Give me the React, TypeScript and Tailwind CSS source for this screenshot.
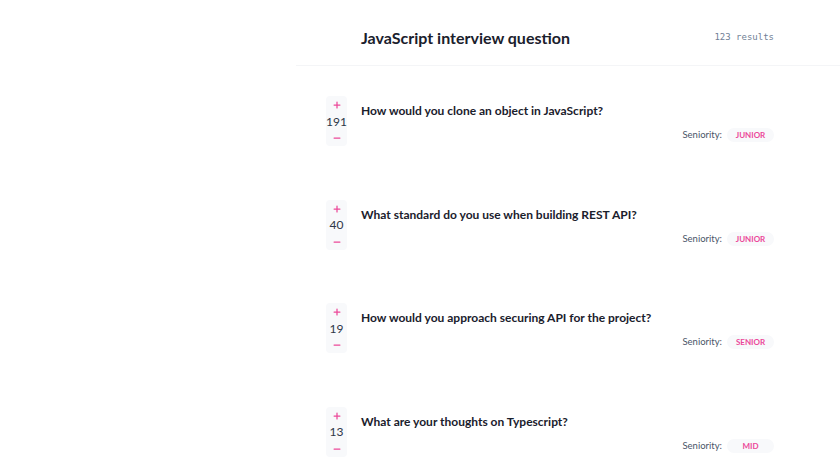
import { Minus, Plus } from 'lucide-react';

const questions = [
  { votes: 191, title: 'How would you clone an object in JavaScript?', seniority: 'Junior' },
  { votes: 40, title: 'What standard do you use when building REST API?', seniority: 'Junior' },
  { votes: 19, title: 'How would you approach securing API for the project?', seniority: 'Senior' },
  { votes: 13, title: 'What are your thoughts on Typescript?', seniority: 'Mid' },
];

function VoteBox({ votes }: { votes: number }) {
  return (
    <div className="flex h-[50px] w-[21px] shrink-0 flex-col items-center justify-between rounded bg-[#f8f9fb] pb-[3px] pt-[4px]">
      <Plus className="text-[#ec4899]" size={10} strokeWidth={3} />
      <span className="text-[12px] leading-none text-[#2d3748]">{votes}</span>
      <Minus className="text-[#ec4899]" size={10} strokeWidth={3} />
    </div>
  );
}

export default function App() {
  return (
    <div className="flex min-h-screen bg-white font-['Lato',sans-serif]">
      <aside className="w-[296px] shrink-0" />
      <main className="flex-1">
        <header className="flex h-[66px] items-center justify-between border-b border-[#f4f5f7] pl-[65px] pr-[66px] pt-[10px]">
          <h1 className="text-[16px] font-bold text-[#1a202c]">JavaScript interview question</h1>
          <span className="font-['DejaVu_Sans_Mono',monospace] text-[9px] text-[#718096]">123 results</span>
        </header>
        <ul>
          {questions.map((q) => (
            <li className="flex h-[103.5px] gap-[14px] pl-[30px] pr-[66px] pt-[30px]" key={q.title}>
              <VoteBox votes={q.votes} />
              <div className="flex flex-1 flex-col">
                <h2 className="mt-[7px] text-[12px] font-bold leading-[16px] text-[#1a202c]">{q.title}</h2>
                <div className="mt-[9px] flex items-center justify-end gap-[5px]">
                  <span className="text-[9.5px] text-[#4a5568]">Seniority:</span>
                  <span className="flex h-[14px] w-[47px] items-center justify-center rounded-full bg-[#f8f9fb] text-[8px] font-bold uppercase text-[#ec4899]">
                    {q.seniority}
                  </span>
                </div>
              </div>
            </li>
          ))}
        </ul>
      </main>
    </div>
  );
}
